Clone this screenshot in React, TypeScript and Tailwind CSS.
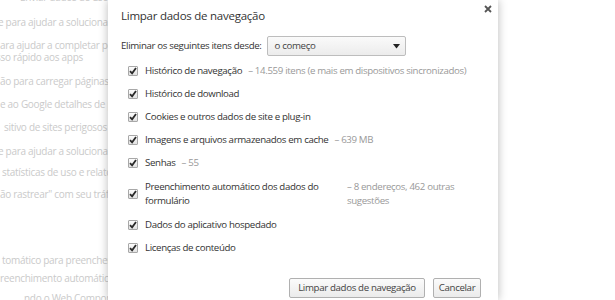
import React from "react";

const font = { fontFamily: '"Open Sans", "Noto Sans", sans-serif' };

// faded text of the settings page behind the overlay, cut by the dialog
const backgroundLines = [
  { text: "Enviar dados de uso", cls: "mt-[-9px] ml-[20px]" },
  { text: "e para ajudar a solucionar erros", cls: "mt-[13px] -ml-[2px]" },
  { text: "ara ajudar a completar pesquisas", cls: "mt-[11px] ml-0" },
  { text: "sso rápido aos apps", cls: "mt-0 -ml-[4px]" },
  { text: "ão para carregar páginas mais", cls: "mt-[12px] ml-0" },
  { text: "e ao Google detalhes de possíveis", cls: "mt-[11px] ml-0" },
  { text: "sitivo de sites perigosos", cls: "mt-[11px] ml-[4px]" },
  { text: "e para ajudar a solucionar erros", cls: "mt-[12px] -ml-[2px]" },
  { text: "statísticas de uso e relatórios", cls: "mt-[9px] ml-[2px]" },
  { text: "ão rastrear\" com seu tráfego", cls: "mt-[10px] ml-0" },
  { text: "tomático para preencher formulários", cls: "mt-[54px] ml-[2px]" },
  { text: "reenchimento automático", cls: "mt-[6px] ml-0" },
  { text: "ndo o Web Components", cls: "mt-[8px] ml-[24px]" },
];

type Row = { label: string; detail?: string; wide?: boolean };

const rows: Row[] = [
  { label: "Histórico de navegação", detail: "14.559 itens (e mais em dispositivos sincronizados)" },
  { label: "Histórico de download" },
  { label: "Cookies e outros dados de site e plug-in" },
  { label: "Imagens e arquivos armazenados em cache", detail: "639 MB" },
  { label: "Senhas", detail: "55" },
  { label: "Preenchimento automático dos dados do formulário", detail: "8 endereços, 462 outras sugestões", wide: true },
  { label: "Dados do aplicativo hospedado" },
  { label: "Licenças de conteúdo" },
];

function CheckBox() {
  return (
    <span className="flex h-[10px] w-[10px] shrink-0 items-center justify-center rounded-[1px] border border-[#a8a8a8] bg-gradient-to-b from-[#fdfdfd] to-[#e2e2e2]">
      <svg width="8" height="8" viewBox="0 0 8 8">
        <path d="M1 4.2 L3.1 6.4 L7 1" fill="none" stroke="#2a2a2a" strokeWidth="1.8" />
      </svg>
    </span>
  );
}

function CheckRow({ row }: { row: Row }) {
  if (row.wide) {
    return (
      <div className="flex items-center py-[2px] leading-[14px]">
        <CheckBox />
        <span className="ml-[7px] w-[192px] shrink-0 text-[#333]">{row.label}</span>
        <span className="ml-[10px] w-[118px] text-[#999]">– {row.detail}</span>
      </div>
    );
  }
  return (
    <div className="flex h-[16px] items-center">
      <CheckBox />
      <span className="ml-[7px] whitespace-nowrap text-[#333]">{row.label}</span>
      {row.detail && (
        <span className="ml-[6px] whitespace-nowrap text-[#999]">– {row.detail}</span>
      )}
    </div>
  );
}

function GrayButton({ children, className = "" }: { children: React.ReactNode; className?: string }) {
  return (
    <button
      className={`h-[20px] whitespace-nowrap rounded-[2px] border border-[#b0b0b0] bg-gradient-to-b from-[#fbfbfb] to-[#ebebeb] leading-none text-[#444] ${className}`}
    >
      {children}
    </button>
  );
}

export default function App() {
  return (
    <div
      className="flex h-[300px] w-[615px] overflow-hidden bg-white text-[9.7px] tracking-[-0.35px]"
      style={font}
    >
      {/* page behind the overlay */}
      <div className="flex w-[108px] shrink-0 flex-col overflow-hidden text-[10px] leading-[12px] tracking-[-0.3px] text-[#cacaca]">
        {backgroundLines.map((line, i) => (
          <div key={i} className={`whitespace-nowrap ${line.cls}`}>
            {line.text}
          </div>
        ))}
      </div>

      {/* dialog */}
      <div className="relative z-10 flex w-[390px] shrink-0 flex-col bg-white pl-[13px] shadow-[0_0_9px_rgba(0,0,0,0.28)]">
        <button className="absolute left-[376px] top-[5px]">
          <svg width="8" height="8" viewBox="0 0 8 8">
            <path d="M1 1 L7 7 M7 1 L1 7" stroke="#555" strokeWidth="1.8" />
          </svg>
        </button>
        <h1 className="mt-[8px] text-[11.5px] leading-[16px] tracking-[-0.25px] text-[#333]">
          Limpar dados de navegação
        </h1>

        <div className="mt-[12px] flex h-[20px] items-center text-[#333]">
          <span className="whitespace-nowrap">Eliminar os seguintes itens desde:</span>
          <div className="ml-[5px] flex h-[20px] w-[139px] items-center justify-between rounded-[2px] border border-[#bdbdbd] bg-gradient-to-b from-[#fafafa] to-[#ececec] pl-[7px] pr-[5px] text-[#444]">
            <span>o começo</span>
            <svg width="7" height="5" viewBox="0 0 7 5">
              <path d="M0 0 H7 L3.5 4.5 Z" fill="#222" />
            </svg>
          </div>
        </div>

        <div className="mt-[7px] flex flex-col gap-[7px] pl-[7px]">
          {rows.map((row) => (
            <CheckRow key={row.label} row={row} />
          ))}
        </div>

        <div className="mt-auto mb-[2px] flex justify-end gap-[8px] pr-[17px]">
          <GrayButton className="w-[136px]">Limpar dados de navegação</GrayButton>
          <GrayButton className="w-[48px]">Cancelar</GrayButton>
        </div>
      </div>

      <div className="flex-1 bg-white" />
    </div>
  );
}
